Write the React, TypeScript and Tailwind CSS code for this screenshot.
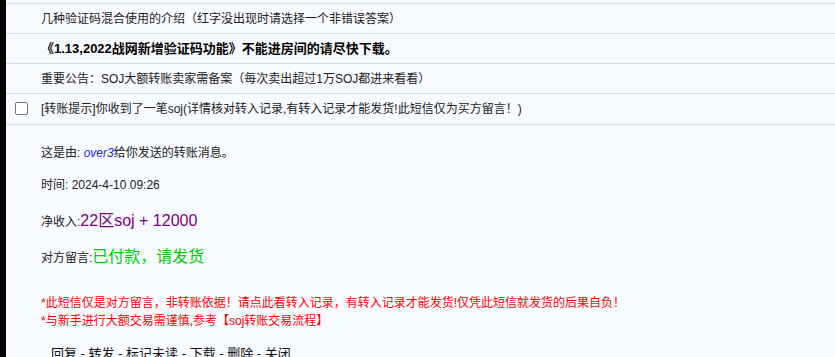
export default function App() {
  const font = "font-['Liberation_Sans','Noto_Sans_CJK_SC',sans-serif]";
  const row = "flex h-[30px] items-center border-b border-[#d3dde8] pl-[35px] text-[12px] text-[#222]";
  return (
    <div className={`flex h-[357px] w-[835px] overflow-hidden bg-black ${font}`}>
      <div className="ml-[6px] flex-1 bg-[#f7faff]">
        <div className="h-[4px] border-b border-[#d3dde8]" />
        <div className={row}>几种验证码混合使用的介绍（红字没出现时请选择一个非错误答案）</div>
        <div className={`${row} font-bold text-[13px] text-black`}>
          《1.13,2022战网新增验证码功能》不能进房间的请尽快下载。
        </div>
        <div className={row}>重要公告：SOJ大额转账卖家需备案（每次卖出超过1万SOJ都进来看看）</div>
        <div className={`${row} relative h-[31px]`}>
          <span className="absolute left-[9px] top-[8px] h-[13px] w-[13px] rounded-[2px] border border-[#767676] bg-white" />
          [转账提示]你收到了一笔soj(详情核对转入记录,有转入记录才能发货!此短信仅为买方留言！)
        </div>

        <div className="pl-[35px] pt-[19px] text-[12px] text-[#222]">
          <p className="leading-[18px]">
            这是由: <span className="italic text-[#1a1aff]">over3</span>给你发送的转账消息。
          </p>
          <p className="mt-[14px] leading-[18px]">时间: 2024-4-10 09:26</p>
          <p className="mt-[15px] leading-[24px]">
            净收入:<span className="text-[16px] text-[#800080]">22区soj + 12000</span>
          </p>
          <p className="mt-[11px] leading-[24px]">
            对方留言:<span className="text-[16px] text-[#00cc00]">已付款，请发货</span>
          </p>
          <div className="mt-[24px] leading-[18px] text-[#ff0000]">
            <p>*此短信仅是对方留言，非转账依据！请点此看转入记录，有转入记录才能发货!仅凭此短信就发货的后果自负！</p>
            <p>*与新手进行大额交易需谨慎,参考【soj转账交易流程】</p>
          </div>
          <p className="mt-[15px] pl-[10px] text-[13px] leading-[18px] text-[#111]">
            回复 - 转发 - 标记未读 - 下载 - 删除 - 关闭
          </p>
        </div>
      </div>
    </div>
  );
}
